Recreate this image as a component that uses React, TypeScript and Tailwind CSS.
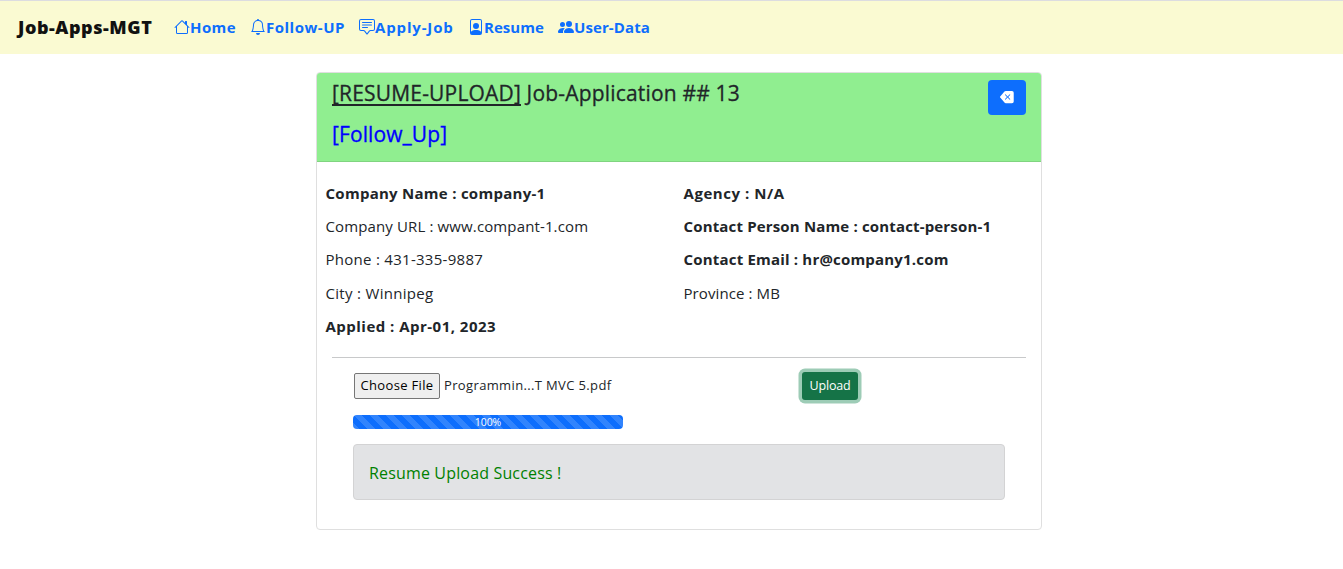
import type { ReactNode } from "react";
import {
  BsBackspaceFill,
  BsBell,
  BsChatSquareText,
  BsFilePerson,
  BsHouse,
  BsPeopleFill,
} from "react-icons/bs";

function NavLink({ icon, children, className }: { icon: ReactNode; children: ReactNode; className: string }) {
  return (
    <a href="#" className={`flex shrink-0 items-center whitespace-nowrap text-[15px] font-bold text-[#0d6efd] ${className}`}>
      <span className="mb-px shrink-0 text-base">{icon}</span>
      {children}
    </a>
  );
}

function Navbar() {
  return (
    <nav className="flex h-[54px] items-center border-t border-[#dcdce0] bg-[#fafad2] pl-[18px]">
      <a href="#" className="mb-px w-[156px] text-lg font-extrabold tracking-[0.55px] text-[#111]">
        Job-Apps-MGT
      </a>
      <NavLink icon={<BsHouse />} className="w-[76px] tracking-[0.4px]">Home</NavLink>
      <NavLink icon={<BsBell />} className="w-[109px] tracking-[0.5px]">Follow-UP</NavLink>
      <NavLink icon={<BsChatSquareText />} className="w-[109px] tracking-[0.85px]">Apply-Job</NavLink>
      <NavLink icon={<BsFilePerson />} className="w-[90px] tracking-[0.05px]">Resume</NavLink>
      <NavLink icon={<BsPeopleFill />} className="tracking-[0.1px]">User-Data</NavLink>
    </nav>
  );
}

export default function App() {
  return (
    <div className="min-h-[569px] bg-white font-['Open_Sans','Noto_Sans',sans-serif] text-[#212529]">
      <Navbar />
      <main className="ml-[316px] mt-[18px] h-[458px] w-[726px] overflow-hidden rounded border border-[#dfdfdf]">
        <header className="flex h-[89px] justify-between border-b border-[#80d480] bg-[#90ee90] pl-[15px] pr-[15px] pt-[7px]">
          <div className="text-[21px] font-medium leading-[26px] [-webkit-text-stroke:0.3px_currentColor]">
            <h1 className="tracking-[0.18px]">
              <u className="decoration-2 underline-offset-[3px]">[RESUME-UPLOAD]</u> Job-Application ## 13
            </h1>
            <a href="#" className="mt-[15px] block tracking-[0.1px] text-[#0000ff]">[Follow_Up]</a>
          </div>
          <button className="flex h-[35px] w-[38px] items-center justify-center rounded bg-[#0d6efd] pb-px text-sm text-white">
            <BsBackspaceFill />
          </button>
        </header>

        <section className="grid grid-cols-[358px_1fr] pl-[8.5px] pt-[15px] text-[15px] leading-[33.2px]">
          <div>
            <p className="font-bold tracking-[0.27px]">Company Name : company-1</p>
            <p className="tracking-[0.13px]">Company URL : www.compant-1.com</p>
            <p className="tracking-[0.28px]">Phone : 431-335-9887</p>
            <p className="tracking-[0.31px]">City : Winnipeg</p>
            <p className="font-bold tracking-[0.48px]">Applied : Apr-01, 2023</p>
          </div>
          <div>
            <p className="font-bold tracking-[0.55px]">Agency : N/A</p>
            <p className="font-bold tracking-[0.16px]">Contact Person Name : contact-person-1</p>
            <p className="font-bold tracking-[0.19px]">Contact Email : hr@company1.com</p>
            <p className="tracking-[0.1px]">Province : MB</p>
          </div>
        </section>

        <hr className="mx-[15px] mt-[14px] border-[#c8c9ca]" />

        <section className="pl-9">
          <div className="mb-0.5 flex h-[55px] items-center text-[13px]">
            <div className="flex w-[449px] items-center gap-1 pl-px">
              <button className="h-[26px] w-[86px] whitespace-nowrap rounded-[2px] border border-[#767676] bg-[#efefef] pt-px tracking-[0.34px] text-black">
                Choose File
              </button>
              <span className="pt-px tracking-[0.36px]">Programmin...T MVC 5.pdf</span>
            </div>
            <button className="h-7 w-14 rounded-[3px] bg-[#157347] pt-0.5 text-[12.5px] tracking-[-0.2px] text-white shadow-[0_0_0_3.5px_rgba(60,153,110,0.5)]">
              Upload
            </button>
          </div>
          <div className="flex h-3.5 w-[270px] items-center justify-center rounded bg-[#0d6efd] bg-[linear-gradient(45deg,rgba(255,255,255,.15)_25%,transparent_25%,transparent_50%,rgba(255,255,255,.15)_50%,rgba(255,255,255,.15)_75%,transparent_75%,transparent)] bg-[length:16px_16px] text-[10.5px] leading-none tracking-[-0.1px] text-white">
            100%
          </div>
          <div className="mt-[15px] flex h-14 w-[652px] items-center rounded border border-[#d3d3d4] bg-[#e2e3e5] pl-[15px] pt-px text-base tracking-[0.16px] text-[#008000]">
            Resume Upload Success !
          </div>
        </section>
      </main>
    </div>
  );
}
